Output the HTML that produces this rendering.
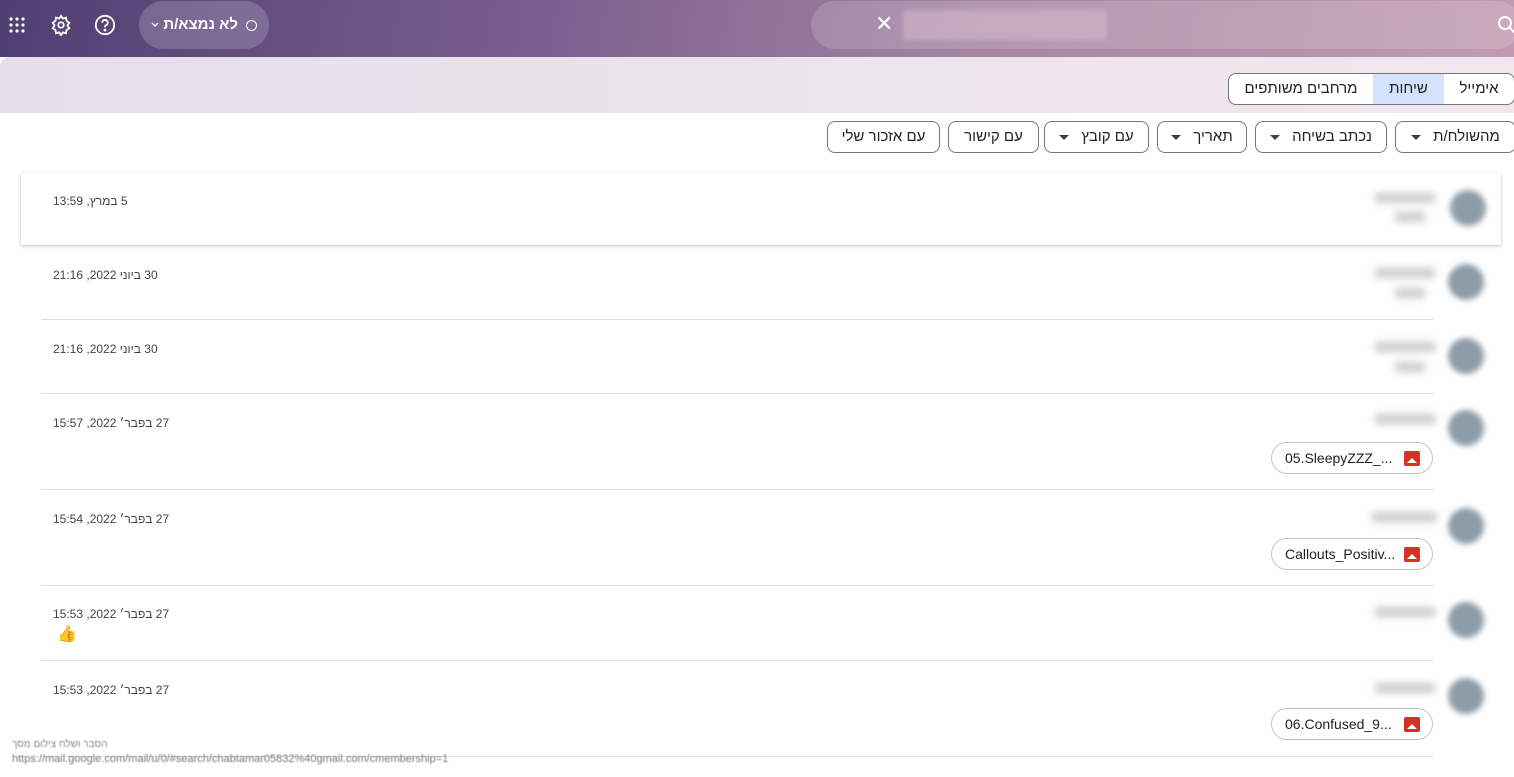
<!DOCTYPE html>
<html><head><meta charset="utf-8"><style>
*{margin:0;padding:0;box-sizing:border-box}
body{width:1514px;height:777px;overflow:hidden;background:#fff;font-family:"Liberation Sans",Arial,sans-serif;position:relative;color:#202124}
.hdr{position:absolute;left:0;top:0;width:1514px;height:57px;background:linear-gradient(100deg,#4f3f72 0%,#7a5d8e 35%,#a586a3 65%,#c29bb1 100%)}
.sub{position:absolute;left:0;top:57px;width:1514px;height:56px;background:linear-gradient(90deg,#e4dfea,#ece4ec 60%,#f2e6ee);border-top-left-radius:10px}
.abs{position:absolute}
.status{left:139px;top:1px;width:130px;height:48px;border-radius:24px;background:rgba(255,255,255,.18);color:#fff;font-size:15px;font-weight:bold}
.search{left:811px;top:1px;width:710px;height:48px;border-radius:24px;background:rgba(255,255,255,.15)}
.tabs{left:1228px;top:73px;width:287px;height:32px;border:1px solid #747775;border-radius:8px;display:flex;overflow:hidden;background:#fff;font-size:15px}
.tabs div{line-height:30px;text-align:center}
.chip{position:absolute;top:121px;height:32px;border:1px solid #747775;border-radius:8px;background:#fff;font-size:15px;line-height:30px;text-align:center;white-space:nowrap}
.chip .ar{display:inline-block;width:0;height:0;border-left:5px solid transparent;border-right:5px solid transparent;border-top:5px solid #444;vertical-align:middle;margin-right:12px}
.date{position:absolute;left:53px;font-size:12px;color:#444}
.line{position:absolute;left:41px;width:1392px;height:1px;background:#ddd}
.av{position:absolute;width:36px;height:36px;border-radius:50%;background:#8c9ca8;filter:blur(3px)}
.nm{position:absolute;height:10px;background:#ccc;filter:blur(4px)}
.att{position:absolute;left:1271px;width:162px;height:32px;border:1px solid #c4c4c4;border-radius:16px;font-size:14px;line-height:30px;padding-left:13px}
.att i{position:absolute;right:12px;top:8px;width:16px;height:15px;background:#d93025;border-radius:2px}
.att i:after{content:"";position:absolute;left:3px;bottom:3px;border-left:5px solid transparent;border-right:5px solid transparent;border-bottom:5px solid #fff}
</style></head><body>
<div class="hdr"></div>
<div class="sub"></div>
<svg class="abs" style="left:8px;top:16px" width="18" height="18" viewBox="0 0 18 18" fill="#fff"><g><circle cx="3" cy="3" r="1.6"/><circle cx="9" cy="3" r="1.6"/><circle cx="15" cy="3" r="1.6"/><circle cx="3" cy="9" r="1.6"/><circle cx="9" cy="9" r="1.6"/><circle cx="15" cy="9" r="1.6"/><circle cx="3" cy="15" r="1.6"/><circle cx="9" cy="15" r="1.6"/><circle cx="15" cy="15" r="1.6"/></g></svg>
<svg class="abs" style="left:50px;top:14px" width="22" height="22" viewBox="0 0 24 24" fill="none" stroke="#fff" stroke-width="2"><circle cx="12" cy="12" r="3"/><path d="M12 2l2 3 3.5-1 .5 3.5 3 2-2 3 2 3-3 2-.5 3.5-3.5-1-2 3-2-3-3.5 1-.5-3.5-3-2 2-3-2-3 3-2 .5-3.5 3.5 1z"/></svg>
<svg class="abs" style="left:94px;top:14px" width="22" height="22" viewBox="0 0 24 24" fill="none" stroke="#fff" stroke-width="2"><circle cx="12" cy="12" r="10"/><path d="M9 9.5a3 3 0 1 1 4 2.8c-.8.4-1 1-1 1.7v.5"/><circle cx="12" cy="17.5" r=".6" fill="#fff"/></svg>
<div class="abs status">
<svg class="abs" style="left:12px;top:21px" width="8" height="6" viewBox="0 0 8 6" fill="none" stroke="#fff" stroke-width="1.3"><path d="M1 1l3 3 3-3"/></svg>
<span class="abs" style="left:27px;top:15px;width:72px;text-align:right;white-space:nowrap" dir="rtl">לא נמצא/ת</span>
<span class="abs" style="left:107px;top:19px;width:11px;height:11px;border:1.5px solid #fff;border-radius:50%"></span></div>
<div class="abs search"></div>
<div class="abs" style="left:875px;top:11px;color:#fff;font-size:22px">✕</div>
<div class="abs" style="left:903px;top:10px;width:204px;height:30px;background:rgba(220,190,210,.5);filter:blur(2px)"></div>
<svg class="abs" style="left:1497px;top:15px" width="20" height="20" viewBox="0 0 20 20" fill="none" stroke="#fff" stroke-width="2"><circle cx="8" cy="8" r="6"/><path d="M12.5 12.5l6 6"/></svg>
<div class="abs tabs" dir="rtl"><div style="width:70px">אימייל</div><div style="width:71px;background:#d3e3fd">שיחות</div><div style="flex:1">מרחבים משותפים</div></div>
<div class="chip" style="left:1395px;width:121px" dir="rtl">מהשולח/ת<span class="ar"></span></div>
<div class="chip" style="left:1255px;width:132px" dir="rtl">נכתב בשיחה<span class="ar"></span></div>
<div class="chip" style="left:1157px;width:90px" dir="rtl">תאריך<span class="ar"></span></div>
<div class="chip" style="left:1044px;width:105px" dir="rtl">עם קובץ<span class="ar"></span></div>
<div class="chip" style="left:948px;width:91px" dir="rtl">עם קישור</div>
<div class="chip" style="left:827px;width:113px" dir="rtl">עם אזכור שלי</div>

<div class="abs" style="left:21px;top:173px;width:1480px;height:72px;background:#fff;box-shadow:0 1px 3px rgba(60,64,67,.35)"></div>
<div class="date" style="top:194px" dir="rtl">5 במרץ, 13:59</div>
<div class="nm" style="left:1375px;top:193px;width:60px"></div><div class="nm" style="left:1395px;top:212px;width:30px"></div><div class="av" style="left:1450px;top:190px"></div>

<div class="date" style="top:268px" dir="rtl">30 ביוני 2022, 21:16</div>
<div class="nm" style="left:1375px;top:268px;width:60px"></div><div class="nm" style="left:1395px;top:288px;width:30px"></div><div class="av" style="left:1448px;top:264px"></div>
<div class="line" style="top:319px"></div>
<div class="date" style="top:342px" dir="rtl">30 ביוני 2022, 21:16</div>
<div class="nm" style="left:1375px;top:342px;width:60px"></div><div class="nm" style="left:1395px;top:362px;width:30px"></div><div class="av" style="left:1448px;top:338px"></div>
<div class="line" style="top:393px"></div>
<div class="date" style="top:416px" dir="rtl">27 בפבר׳ 2022, 15:57</div>
<div class="nm" style="left:1375px;top:414px;width:60px"></div><div class="av" style="left:1448px;top:410px"></div>
<div class="att" style="top:442px" dir="ltr">05.SleepyZZZ_...<i></i></div>
<div class="line" style="top:489px"></div>
<div class="date" style="top:512px" dir="rtl">27 בפבר׳ 2022, 15:54</div>
<div class="nm" style="left:1372px;top:512px;width:65px"></div><div class="av" style="left:1448px;top:508px"></div>
<div class="att" style="top:538px" dir="ltr">Callouts_Positiv...<i></i></div>
<div class="line" style="top:585px"></div>
<div class="date" style="top:607px" dir="rtl">27 בפבר׳ 2022, 15:53</div>
<div class="abs" style="left:57px;top:624px;font-size:16px">👍</div>
<div class="nm" style="left:1375px;top:607px;width:60px"></div><div class="av" style="left:1448px;top:602px"></div>
<div class="line" style="top:660px"></div>
<div class="date" style="top:683px" dir="rtl">27 בפבר׳ 2022, 15:53</div>
<div class="nm" style="left:1375px;top:683px;width:60px"></div><div class="av" style="left:1448px;top:678px"></div>
<div class="att" style="top:708px" dir="ltr">06.Confused_9...<i></i></div>
<div class="line" style="top:756px"></div>
<div class="abs" style="left:12px;top:739px;font-size:10px;color:#888;filter:blur(.6px)">הסבר ושלח צילום מסך</div>
<div class="abs" style="left:12px;top:753px;font-size:11px;color:#777;filter:blur(.6px)">https://mail.google.com/mail/u/0/#search/chabtamar05832%40gmail.com/cmembership=1</div>
</body></html>
